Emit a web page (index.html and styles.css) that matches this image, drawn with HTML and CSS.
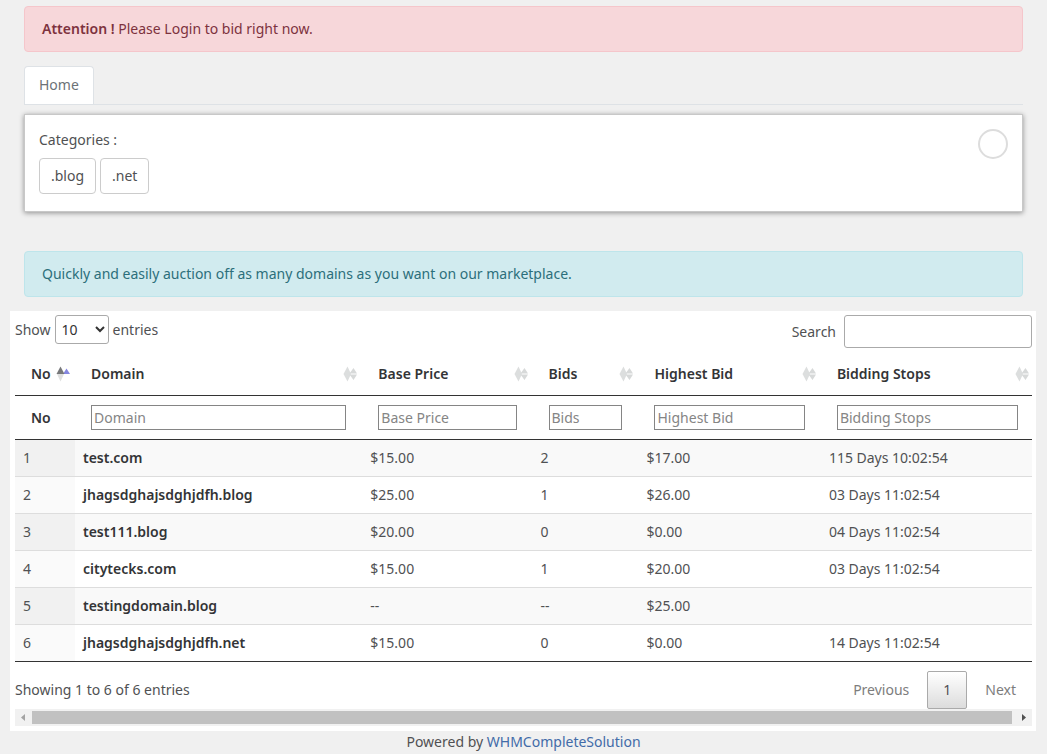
FILE: index.html
```html
<!DOCTYPE html>
<html lang="en">
<head>
    <meta charset="UTF-8">
    <meta name="viewport" content="width=device-width, initial-scale=1.0">
    <title>Domain Auction</title>
    <link rel="stylesheet" href="styles.css">
</head>
<body>

    <svg class="sprite" aria-hidden="true">
        <symbol id="sort" viewBox="0 0 14 16">
            <path fill="#dcdede" d="M4.5 0.5L8 8L4.5 15.5L0.5 8Z"/>
            <path fill="#d7d9d9" d="M10.5 2L14 7.5H6.5Z M6.5 8.5H14L10.5 14Z"/>
        </symbol>
        <symbol id="sort-asc" viewBox="0 0 14 16">
            <path fill="#dfe0e0" d="M1 8H8L4.5 15.5Z"/>
            <path fill="#8587e0" d="M10.5 2.5L14 8H7Z"/>
            <path fill="#77787a" d="M4.5 0.5L8.5 8H0.5Z"/>
        </symbol>
    </svg>

    <div class="container">
        <div class="alert alert-danger"><strong>Attention !</strong> Please Login to bid right now.</div>

        <nav class="tabs">
            <a href="#" class="tab">Home</a>
        </nav>

        <div class="card">
            <div>
                <p class="card-title">Categories :</p>
                <div class="categories">
                    <button type="button" class="btn">.blog</button>
                    <button type="button" class="btn">.net</button>
                </div>
            </div>
            <button type="button" class="round" aria-label="Toggle categories"></button>
        </div>

        <div class="alert alert-info">Quickly and easily auction off as many domains as you want on our marketplace.</div>
    </div>

    <div class="panel">
        <div class="toolbar">
            <label class="length">Show
                <select>
                    <option>10</option>
                    <option>25</option>
                    <option>50</option>
                    <option>100</option>
                </select>
                entries
            </label>
            <label class="search">Search <input type="search"></label>
        </div>

        <div class="table-wrap">
            <table>
                <colgroup>
                    <col class="col-no">
                    <col class="col-domain">
                    <col class="col-price">
                    <col class="col-bids">
                    <col class="col-highest">
                    <col class="col-stops">
                </colgroup>
                <thead>
                    <tr class="titles">
                        <th><div class="title">No <svg class="sort"><use href="#sort-asc"/></svg></div></th>
                        <th><div class="title">Domain <svg class="sort"><use href="#sort"/></svg></div></th>
                        <th><div class="title">Base Price <svg class="sort"><use href="#sort"/></svg></div></th>
                        <th><div class="title">Bids <svg class="sort"><use href="#sort"/></svg></div></th>
                        <th><div class="title">Highest Bid <svg class="sort"><use href="#sort"/></svg></div></th>
                        <th><div class="title">Bidding Stops <svg class="sort"><use href="#sort"/></svg></div></th>
                    </tr>
                    <tr class="filters">
                        <th>No</th>
                        <th><input type="text" placeholder="Domain" aria-label="Domain"></th>
                        <th><input type="text" placeholder="Base Price" aria-label="Base Price"></th>
                        <th><input type="text" placeholder="Bids" aria-label="Bids"></th>
                        <th><input type="text" placeholder="Highest Bid" aria-label="Highest Bid"></th>
                        <th><input type="text" placeholder="Bidding Stops" aria-label="Bidding Stops"></th>
                    </tr>
                </thead>
                <tbody>
                    <tr>
                        <td>1</td>
                        <td><strong>test.com</strong></td>
                        <td>$15.00</td>
                        <td>2</td>
                        <td>$17.00</td>
                        <td>115 Days 10:02:54</td>
                    </tr>
                    <tr>
                        <td>2</td>
                        <td><strong>jhagsdghajsdghjdfh.blog</strong></td>
                        <td>$25.00</td>
                        <td>1</td>
                        <td>$26.00</td>
                        <td>03 Days 11:02:54</td>
                    </tr>
                    <tr>
                        <td>3</td>
                        <td><strong>test111.blog</strong></td>
                        <td>$20.00</td>
                        <td>0</td>
                        <td>$0.00</td>
                        <td>04 Days 11:02:54</td>
                    </tr>
                    <tr>
                        <td>4</td>
                        <td><strong>citytecks.com</strong></td>
                        <td>$15.00</td>
                        <td>1</td>
                        <td>$20.00</td>
                        <td>03 Days 11:02:54</td>
                    </tr>
                    <tr>
                        <td>5</td>
                        <td><strong>testingdomain.blog</strong></td>
                        <td>--</td>
                        <td>--</td>
                        <td>$25.00</td>
                        <td></td>
                    </tr>
                    <tr>
                        <td>6</td>
                        <td><strong>jhagsdghajsdghjdfh.net</strong></td>
                        <td>$15.00</td>
                        <td>0</td>
                        <td>$0.00</td>
                        <td>14 Days 11:02:54</td>
                    </tr>
                </tbody>
            </table>
        </div>

        <div class="table-footer">
            <div>Showing 1 to 6 of 6 entries</div>
            <div class="pages">
                <button type="button" class="page">Previous</button>
                <button type="button" class="page current">1</button>
                <button type="button" class="page">Next</button>
            </div>
        </div>

        <div class="scrollbar">
            <svg class="arrow" viewBox="0 0 17 13"><path fill="#a3a3a3" d="M10 3V10L6 6.5Z"/></svg>
            <div class="thumb"></div>
            <svg class="arrow" viewBox="0 0 17 13"><path fill="#505050" d="M7 3V10L11 6.5Z"/></svg>
        </div>
    </div>

    <footer>Powered by <a href="#">WHMCompleteSolution</a></footer>

</body>
</html>
```
FILE: styles.css
```css
* {
    box-sizing: border-box;
}
body {
    margin: 0;
    padding-top: 6px;
    font-family: "Noto Sans", "Open Sans", sans-serif;
    font-size: 14px;
    line-height: 22px;
    color: #505153;
    background-color: #f0f0f0;
}
button, input, select {
    font-family: inherit;
    font-size: inherit;
    line-height: inherit;
    color: inherit;
    margin: 0;
}
strong, th {
    font-weight: 600;
}
.sprite {
    display: none;
}
.container {
    padding: 0 24px;
}
.alert {
    padding: 11px 17px;
    border: 1px solid;
    border-radius: 4px;
}
.alert-danger {
    color: #7d323e;
    background-color: #f7d7da;
    border-color: #f5c6cb;
}
.alert-info {
    color: #2c6f7b;
    background-color: #d1ebef;
    border-color: #bee5eb;
}
.tabs {
    display: flex;
    margin: 14px 0 9px;
    border-bottom: 1px solid #dee2e6;
}
.tab {
    padding: 7px 14px 8px;
    border: 1px solid #dee2e6;
    border-bottom: 0;
    border-radius: 4px 4px 0 0;
    color: #6c7277;
    background-color: #fff;
    text-decoration: none;
}
.card {
    display: flex;
    justify-content: space-between;
    align-items: flex-start;
    margin-bottom: 39px;
    padding: 14px;
    padding-bottom: 17px;
    border: 1px solid #c8c8c8;
    background-color: #fff;
    box-shadow: 0 1px 5px rgba(0, 0, 0, 0.4);
}
.card-title {
    margin: 0 0 7px;
}
.categories {
    display: flex;
    gap: 4px;
}
.btn {
    padding: 6px 11px;
    border: 1px solid #ccc;
    border-radius: 4px;
    background-color: #fff;
}
.round {
    width: 30px;
    height: 30px;
    padding: 0;
    border: 2px solid #ddd;
    border-radius: 50%;
    background-color: #fff;
}

/* auction list */
.panel {
    margin: 14px 11px 0 10px;
    padding: 4px 4px 5px 5px;
    background-color: #fff;
}
.toolbar {
    display: flex;
    justify-content: space-between;
    align-items: flex-start;
    padding-bottom: 7px;
}
.length {
    display: flex;
    align-items: center;
    gap: 4px;
}
.length select {
    width: 54px;
    height: 29px;
    padding: 0 2px;
    border: 1px solid #aaa;
    border-radius: 3px;
    background-color: #fff;
    color: #333;
}
.search {
    display: flex;
    align-items: center;
    gap: 8px;
}
.search input {
    width: 188px;
    height: 33px;
    padding: 4px;
    border: 1px solid #aaa;
    border-radius: 3px;
    background-color: #fff;
}
/* the table is slightly wider than its scroll area */
.table-wrap {
    overflow: hidden;
}
table {
    width: calc(100% + 2px);
    table-layout: fixed;
    border-collapse: separate;
    border-spacing: 0;
    border-bottom: 1px solid #333;
}
.col-no {
    width: 60px;
}
.col-domain {
    width: 28.2%;
}
.col-price {
    width: 16.7%;
}
.col-bids {
    width: 10.4%;
}
.col-highest {
    width: 17.9%;
}
th {
    text-align: left;
    color: #333436;
    border-bottom: 1px solid #333;
}
.titles th {
    padding: 8px 5px 10px 16px;
}
.filters th {
    padding: 9px 16px;
}
.title {
    display: flex;
    justify-content: space-between;
    align-items: center;
}
.sort {
    width: 14px;
    height: 16px;
}
.filters input {
    display: block;
    width: 100%;
    height: 25px;
    padding: 0 2px;
    border: 1px solid #858585;
    background-color: #fff;
}
.filters input::placeholder {
    color: #858585;
}
td {
    padding: 7px 8px;
    border-top: 1px solid #ddd;
}
tr:first-child td {
    border-top: 0;
}
td strong {
    color: #333436;
}
tbody tr:nth-child(odd) {
    background-color: #f9f9f9;
}
td:first-child {
    background-color: #fafafa;
}
tr:nth-child(odd) td:first-child {
    background-color: #f1f1f1;
}
.table-footer {
    display: flex;
    justify-content: space-between;
    align-items: center;
    padding-top: 9px;
}
.pages {
    display: flex;
    gap: 2px;
}
.page {
    padding: 7px 15px;
    border: 1px solid transparent;
    border-radius: 2px;
    background: none;
    color: #7d7d7d;
}
.page.current {
    border-color: #aaa;
    color: #505153;
    background: linear-gradient(#fff, #dcdcdc);
}
.scrollbar {
    display: flex;
    height: 17px;
    padding: 2px 0;
    background-color: #f1f1f1;
}
.arrow {
    width: 17px;
    height: 13px;
}
.thumb {
    flex: 1;
    margin-right: 3px;
    background-color: #c1c1c1;
}
footer {
    text-align: center;
}
footer a {
    color: #426ba8;
    text-decoration: none;
}
```
